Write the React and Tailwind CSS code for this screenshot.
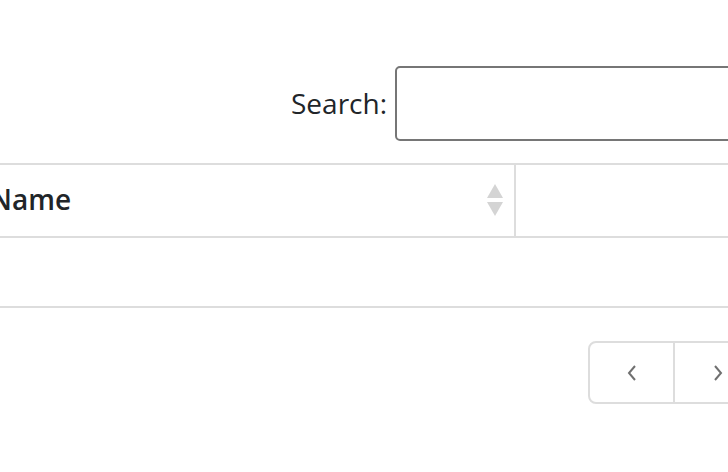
export default function App() {
  return (
    <div className="w-[728px] h-[472px] overflow-hidden bg-white text-[#212529] font-['Open_Sans',sans-serif]">
      <div className="pt-[66px] flex items-center ml-[291px]">
        <label className="text-[28px] leading-[40px] mb-[1px]">Search:</label>
        <input
          type="search"
          className="ml-[8px] w-[420px] h-[75px] shrink-0 border-2 border-[#767676] rounded-[5px] outline-none"
        />
      </div>

      <div className="mt-[22px] ml-[-41px] w-[900px]">
        <div className="flex border-t-2 border-b-2 border-[#dddddd] h-[75px]">
          <div className="w-[557px] shrink-0 flex items-center pl-[31px] pr-[10px] border-r-2 border-[#dddddd]">
            <span className="text-[28px] font-semibold flex-1 mb-[3px]">Name</span>
            <svg width="18" height="32" viewBox="0 0 18 32" className="mb-[2px]">
              <path d="M9 0 L17 14 L1 14 Z" fill="#d4d4d4" />
              <path d="M1 18 L17 18 L9 32 Z" fill="#d4d4d4" />
            </svg>
          </div>
          <div className="flex-1" />
        </div>
        <div className="h-[70px] border-b-2 border-[#dddddd]" />
      </div>

      <div className="mt-[33px] ml-[588px] flex h-[63px] w-[200px] border-2 border-[#dddddd] rounded-[8px]">
        <button className="w-[85px] h-full flex items-center justify-center border-r-2 border-[#dddddd]">
          <svg width="12" height="18" viewBox="0 0 12 18">
            <path d="M9 2 L3 9 L9 16" fill="none" stroke="#707070" strokeWidth="2" />
          </svg>
        </button>
        <button className="w-[85px] h-full flex items-center justify-center">
          <svg width="12" height="18" viewBox="0 0 12 18">
            <path d="M3 2 L9 9 L3 16" fill="none" stroke="#707070" strokeWidth="2" />
          </svg>
        </button>
      </div>
    </div>
  );
}
